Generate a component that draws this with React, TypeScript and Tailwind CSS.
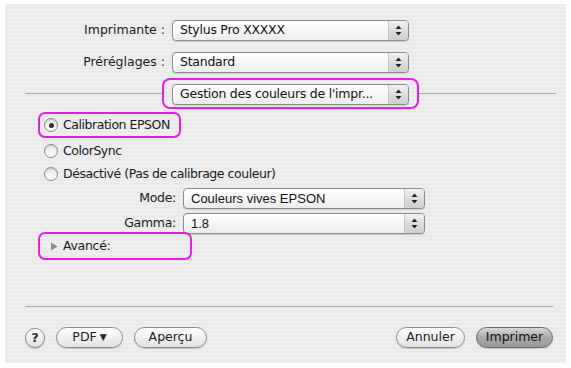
import React from "react";

const F = { fontFamily: '"DejaVu Sans", "Noto Sans", sans-serif' };

function Arrows() {
  return (
    <svg width="7" height="11" viewBox="0 0 7 11">
      <polygon points="3.5,0.5 6.5,4 0.5,4" fill="#222" />
      <polygon points="3.5,10.5 6.5,7 0.5,7" fill="#222" />
    </svg>
  );
}

function Popup({ text, w, arial }: { text: string; w: string; arial?: boolean }) {
  return (
    <div
      className={`flex h-[21px] ${w} overflow-hidden rounded-[4px] border border-[#8d8d8d] bg-[linear-gradient(#ffffff,#f7f7f7_50%,#ececec)] shadow-[0_1px_1px_rgba(0,0,0,0.15)]`}
    >
      <div
        className={`flex flex-1 items-center pl-[7px] ${arial ? "text-[13px]" : "text-[12.5px] tracking-[-0.25px]"} text-[#111]`}
        style={arial ? { fontFamily: '"Liberation Sans", Arial, sans-serif' } : F}
      >
        {text}
      </div>
      <div className="flex w-[20px] items-center justify-center border-l border-[#c4c4c4] bg-[linear-gradient(#f2f2f2,#dcdcdc_50%,#cfcfcf)]">
        <Arrows />
      </div>
    </div>
  );
}

function Radio({ on }: { on?: boolean }) {
  return (
    <div className="flex h-[14px] w-[14px] items-center justify-center rounded-full border border-[#8a8a8a] bg-[linear-gradient(#e6e6e6,#ffffff)] shadow-[inset_0_1px_1px_rgba(0,0,0,0.15)]">
      {on && <div className="h-[5px] w-[5px] rounded-full bg-[#333]" />}
    </div>
  );
}

function Btn({ children, w, dark }: { children: React.ReactNode; w: string; dark?: boolean }) {
  return (
    <div
      className={`flex h-[21px] ${w} items-center justify-center rounded-full border text-[12.5px] ${
        dark
          ? "border-[#6a6a6a] bg-[linear-gradient(#d8d8d8,#a8a8a8_50%,#9a9a9a)] text-[#111]"
          : "border-[#8c8c8c] bg-[linear-gradient(#ffffff,#f0f0f0_50%,#e2e2e2)] text-[#222]"
      } shadow-[0_1px_1px_rgba(0,0,0,0.15)]`}
      style={F}
    >
      {children}
    </div>
  );
}

export default function App() {
  return (
    <div className="h-[368px] w-[571px] bg-white pl-[5px] pr-[5px] pt-[4px] pb-[5px]" style={F}>
      <div className="flex h-full w-full flex-col bg-[repeating-linear-gradient(0deg,#eeeeee_0px,#eeeeee_2px,#eaeaea_2px,#eaeaea_4px)] text-[#1a1a1a]">
        {/* top rows */}
        <div className="mt-[16px] flex items-center">
          <div className="w-[161px] pr-[1px] text-right text-[12.5px]">Imprimante :</div>
          <div className="ml-[6px]">
            <Popup text="Stylus Pro XXXXX" w="w-[237px]" />
          </div>
        </div>
        <div className="mt-[11px] flex items-center">
          <div className="w-[161px] pr-[1px] text-right text-[12.5px]">Préréglages :</div>
          <div className="ml-[6px]">
            <Popup text="Standard" w="w-[237px]" />
          </div>
        </div>
        {/* separator with pane selector */}
        <div className="mt-[5px] flex items-center">
          <div className="ml-[20px] h-px w-[137px] bg-[#a8a8a8]" />
          <div className="rounded-[8px] border-2 border-[#e81ee8] px-[8px] pb-[2px] pt-[4px]">
            <Popup text="Gestion des couleurs de l'impr..." w="w-[237px]" />
          </div>
          <div className="h-px w-[137px] bg-[#a8a8a8]" />
        </div>
        {/* radios */}
        <div className="ml-[33px] mt-[3px] flex h-[26px] w-[143px] items-center gap-[5px] rounded-[7px] border-2 border-[#e81ee8] pl-[4px] text-[12.5px] tracking-[-0.45px]">
          <Radio on />
          <span>Calibration EPSON</span>
        </div>
        <div className="ml-[39px] mt-[3px] flex h-[20px] items-center gap-[5px] text-[12.5px] tracking-[-0.45px]">
          <Radio />
          <span>ColorSync</span>
        </div>
        <div className="ml-[39px] mt-[3px] flex h-[20px] items-center gap-[5px] text-[12.5px] tracking-[-0.45px]">
          <Radio />
          <span>Désactivé (Pas de calibrage couleur)</span>
        </div>
        <div className="mt-[4px] flex items-center">
          <div className="w-[171px] text-right text-[12.5px] tracking-[-0.3px]">Mode:</div>
          <div className="ml-[7px]">
            <Popup text="Couleurs vives EPSON" w="w-[242px]" arial />
          </div>
        </div>
        <div className="mt-[4px] flex items-center">
          <div className="w-[171px] text-right text-[12.5px] tracking-[-0.3px]">Gamma:</div>
          <div className="ml-[7px]">
            <Popup text="1.8" w="w-[242px]" arial />
          </div>
        </div>
        <div className="ml-[33px] mt-[-2px] flex h-[28px] w-[154px] items-center gap-[5px] rounded-[7px] border-2 border-[#e81ee8] pl-[10px] text-[12.5px] tracking-[-0.3px]">
          <svg width="8" height="9" viewBox="0 0 8 9">
            <polygon points="1,0.5 7.5,4.5 1,8.5" fill="#8a8a8a" />
          </svg>
          <span>Avancé:</span>
        </div>
        <div className="ml-[20px] mt-[46px] h-px w-[528px] bg-[#a8a8a8]" />
        {/* bottom buttons */}
        <div className="mt-[20px] flex items-center pl-[20px] pr-[13px]">
          <div className="flex h-[20px] w-[20px] items-center justify-center rounded-full border border-[#8a8a8a] bg-[linear-gradient(#ffffff,#dedede)] text-[13px] font-bold text-[#333] shadow-[0_1px_1px_rgba(0,0,0,0.2)]">
            ?
          </div>
          <div className="ml-[11px]">
            <Btn w="w-[67px]">
              PDF <span className="ml-[3px] text-[9px]">▼</span>
            </Btn>
          </div>
          <div className="ml-[11px]">
            <Btn w="w-[73px]">Aperçu</Btn>
          </div>
          <div className="flex-1" />
          <Btn w="w-[69px]">Annuler</Btn>
          <div className="ml-[11px]">
            <Btn w="w-[77px]" dark>
              Imprimer
            </Btn>
          </div>
        </div>
      </div>
    </div>
  );
}
